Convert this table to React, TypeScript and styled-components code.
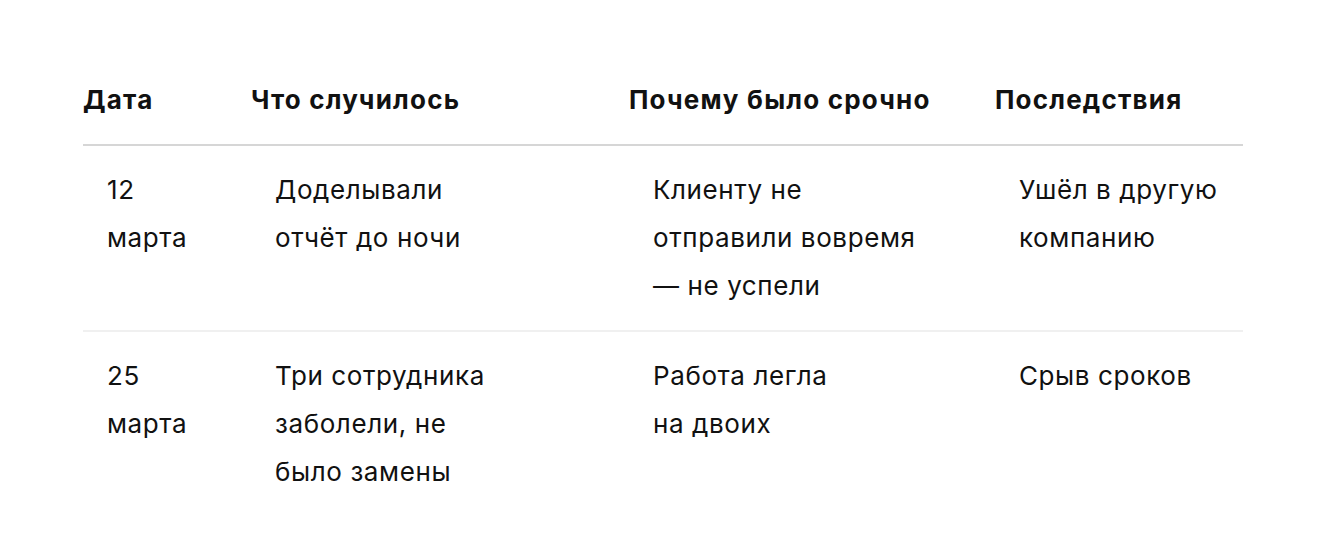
import React from "react";
import styled, { createGlobalStyle } from "styled-components";

const GlobalStyle = createGlobalStyle`
    body {
        margin: 0;
        background: #ffffff;
        font-family: Inter, "Noto Sans", sans-serif;
        color: #111111;
    }
`;

const rows = [
    {
        date: ["12", "марта"],
        what: ["Доделывали", "отчёт до ночи"],
        why: ["Клиенту не", "отправили вовремя", "— не успели"],
        result: ["Ушёл в другую", "компанию"],
    },
    {
        date: ["25", "марта"],
        what: ["Три сотрудника", "заболели, не", "было замены"],
        why: ["Работа легла", "на двоих"],
        result: ["Срыв сроков"],
    },
];

const columns = [
    { title: "Дата", width: 168 },
    { title: "Что случилось", width: 378 },
    { title: "Почему было срочно", width: 366 },
    { title: "Последствия", width: 248 },
];

function Lines(props: { lines: string[] }) {
    return (
        <>
            {props.lines.map((line, i) => (
                <React.Fragment key={i}>
                    {i > 0 && <br />}
                    {line}
                </React.Fragment>
            ))}
        </>
    );
}

export default function App() {
    return (
        <>
            <GlobalStyle />
            <Page>
                <Table>
                    <colgroup>
                        {columns.map((c) => (
                            <col key={c.title} style={{ width: c.width }} />
                        ))}
                    </colgroup>
                    <thead>
                        <tr>
                            {columns.map((c) => (
                                <HeadCell key={c.title}>{c.title}</HeadCell>
                            ))}
                        </tr>
                    </thead>
                    <tbody>
                        {rows.map((r, i) => (
                            <Row key={i}>
                                <Cell>
                                    <Lines lines={r.date} />
                                </Cell>
                                <Cell>
                                    <Lines lines={r.what} />
                                </Cell>
                                <Cell>
                                    <Lines lines={r.why} />
                                </Cell>
                                <Cell>
                                    <Lines lines={r.result} />
                                </Cell>
                            </Row>
                        ))}
                    </tbody>
                </Table>
            </Page>
        </>
    );
}

const Page = styled.div`
    padding: 76px 87px 0 83px;
`;

const Table = styled.table`
    width: 1160px;
    border-collapse: collapse;
    table-layout: fixed;
    font-size: 26px;
    line-height: 48px;
`;

const HeadCell = styled.th`
    text-align: left;
    font-weight: 700;
    letter-spacing: 1.2px;
    padding: 0 0 20px;
    border-bottom: 2px solid #d6d6d6;
    white-space: nowrap;
`;

const Row = styled.tr`
    & + & td {
        border-top: 2px solid #f0f0f0;
    }
`;

const Cell = styled.td`
    vertical-align: top;
    padding: 20px 24px;
    font-weight: 400;
    letter-spacing: 0.6px;
`;
